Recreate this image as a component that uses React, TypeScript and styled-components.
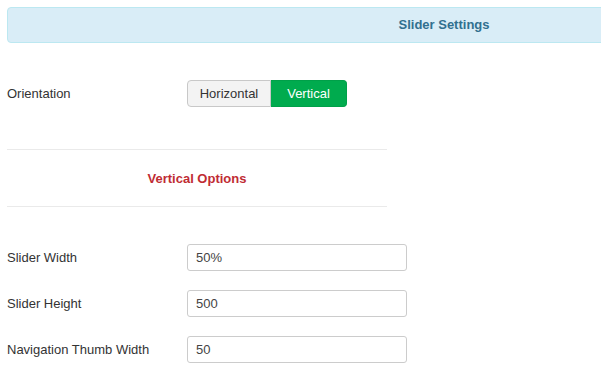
import * as React from "react";
import { FC, useState } from "react";
import styled, { createGlobalStyle } from "styled-components";

const GlobalStyle = createGlobalStyle`
  html, body {
    margin: 0;
    padding: 0;
    background: #fff;
    overflow: hidden;
  }
  body {
    font-family: "Liberation Sans", Arial, sans-serif;
    font-size: 13px;
    color: #333;
  }
`;

const Viewport = styled.div`
  width: 100vw;
  height: 100vh;
  overflow: hidden;
`;

const Page = styled.div`
  padding: 7px;
  width: 874px;
`;

const PanelHeader = styled.div`
  box-sizing: border-box;
  height: 36px;
  line-height: 34px;
  background-color: #d9edf7;
  border: 1px solid #bce8f1;
  border-radius: 4px;
  text-align: center;
  font-weight: bold;
  color: #31708f;
`;

const Row = styled.div<{ $top: number }>`
  display: flex;
  align-items: center;
  margin-top: ${(p) => p.$top}px;
`;

const Label = styled.div`
  width: 180px;
  flex-shrink: 0;
`;

const ButtonGroup = styled.div`
  display: flex;
`;

const ToggleButton = styled.button<{ $active: boolean; $width: number }>`
  box-sizing: border-box;
  width: ${(p) => p.$width}px;
  height: 27px;
  padding: 0;
  font-family: inherit;
  font-size: 13px;
  cursor: pointer;
  border: 1px solid ${(p) => (p.$active ? "#00a049" : "#c8c8c8")};
  background-color: ${(p) => (p.$active ? "#00ab4e" : "#f3f3f3")};
  color: ${(p) => (p.$active ? "#fff" : "#333")};
  &:first-child {
    border-radius: 4px 0 0 4px;
  }
  &:last-child {
    border-radius: 0 4px 4px 0;
    border-left: none;
  }
`;

const SectionTitle = styled.div`
  box-sizing: border-box;
  width: 380px;
  height: 58px;
  margin-top: 42px;
  border-top: 1px solid #eaeaea;
  border-bottom: 1px solid #eaeaea;
  display: flex;
  align-items: center;
  justify-content: center;
  font-weight: bold;
  color: #bf2c34;
`;

const TextInput = styled.input`
  box-sizing: border-box;
  width: 220px;
  height: 27px;
  padding: 0 8px;
  font-family: inherit;
  font-size: 13px;
  color: #444;
  border: 1px solid #ccc;
  border-radius: 3px;
  outline: none;
`;

const fields = [
  { label: "Slider Width", value: "50%" },
  { label: "Slider Height", value: "500" },
  { label: "Navigation Thumb Width", value: "50" },
];

const App: FC = () => {
  const [orientation, setOrientation] = useState("vertical");

  return (
    <Viewport>
      <GlobalStyle />
      <Page>
        <PanelHeader>Slider Settings</PanelHeader>
        <Row $top={37}>
          <Label>Orientation</Label>
          <ButtonGroup>
            <ToggleButton
              $width={84}
              $active={orientation === "horizontal"}
              onClick={() => setOrientation("horizontal")}
            >
              Horizontal
            </ToggleButton>
            <ToggleButton
              $width={76}
              $active={orientation === "vertical"}
              onClick={() => setOrientation("vertical")}
            >
              Vertical
            </ToggleButton>
          </ButtonGroup>
        </Row>
        <SectionTitle>Vertical Options</SectionTitle>
        {fields.map((field, i) => (
          <Row key={field.label} $top={i === 0 ? 37 : 19}>
            <Label>{field.label}</Label>
            <TextInput defaultValue={field.value} />
          </Row>
        ))}
      </Page>
    </Viewport>
  );
};

export default App;
